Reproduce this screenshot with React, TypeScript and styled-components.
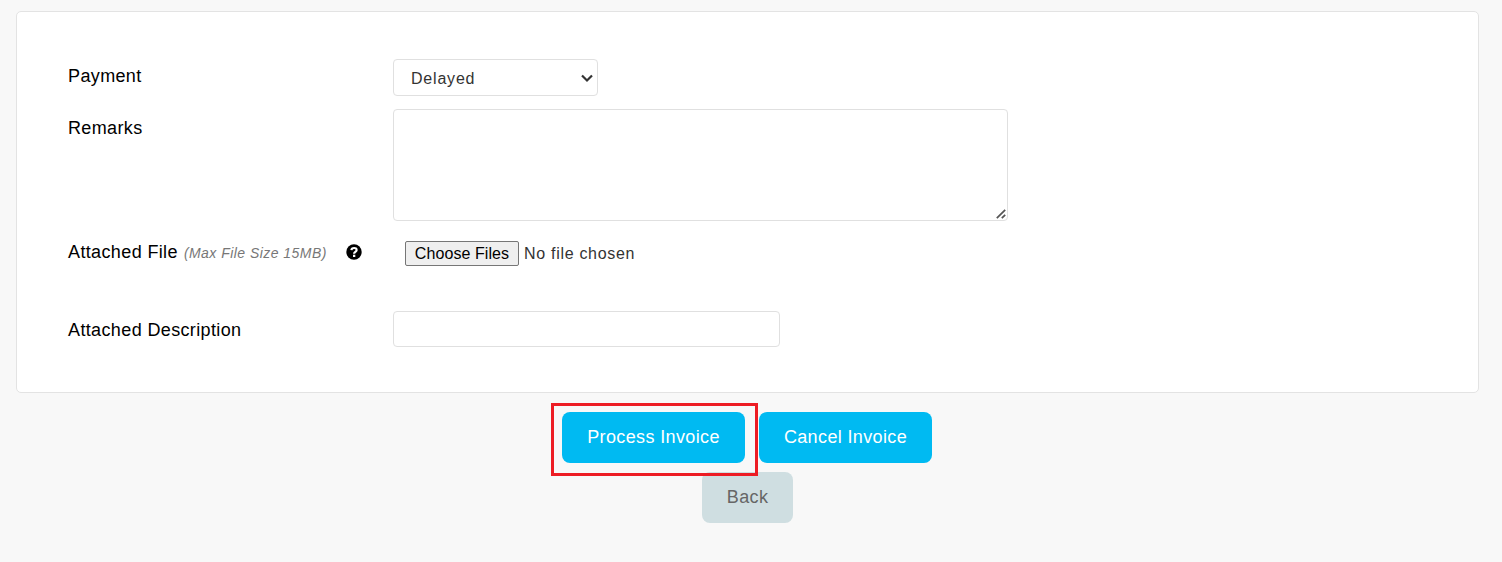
import React from 'react';
import styled, { createGlobalStyle } from 'styled-components';

const GlobalStyle = createGlobalStyle`
  * { box-sizing: border-box; }
  body { margin: 0; background: #f8f8f8; font-family: "Liberation Sans", Arial, sans-serif; color: #000; }
`;
const Page = styled.main`
  height: 562px;
  padding: 11px 23px 0 16px;
  overflow: hidden;
`;
const Card = styled.section`
  height: 382px;
  padding: 47px 51px 0;
  background: #fff;
  border: 1px solid #e3e3e3;
  border-radius: 5px;
`;
const Row = styled.div<{ $height: number }>`
  display: flex;
  align-items: flex-start;
  height: ${p => p.$height}px;
`;
const Label = styled.label<{ $top: number }>`
  display: flex;
  align-items: center;
  width: 325px;
  flex: none;
  height: 22px;
  margin-top: ${p => p.$top}px;
  font-size: 18px;
  letter-spacing: 0.37px;
  white-space: nowrap;
`;
const Hint = styled.em`
  margin: 2px 0 0 6px;
  font-size: 14px;
  letter-spacing: 0.46px;
  color: #777;
`;
const HelpIcon = styled.svg`
  margin-left: 19px;
`;
const SelectBox = styled.div`
  display: flex;
  align-items: center;
  justify-content: space-between;
  width: 205px;
  height: 37px;
  padding: 2px 4px 0 17px;
  border: 1px solid #e0e0e0;
  border-radius: 4px;
  font-size: 16px;
  letter-spacing: 0.8px;
  color: #333;
`;
const TextAreaFrame = styled.div`
  position: relative;
  height: 112px;
`;
const TextArea = styled.textarea`
  width: 615px;
  height: 112px;
  border: 1px solid #e0e0e0;
  border-radius: 4px;
  outline: none;
  resize: none;
`;
const ResizeGrip = styled.svg`
  position: absolute;
  right: 2px;
  bottom: 2px;
`;
const TextInput = styled.input`
  width: 387px;
  height: 36px;
  border: 1px solid #e0e0e0;
  border-radius: 4px;
  outline: none;
`;
const FilePicker = styled.div`
  display: flex;
  align-items: center;
  margin-left: 12px;
  gap: 5px;
  font-size: 16px;
  letter-spacing: 0.7px;
  color: #333;
`;
const ChooseButton = styled.button`
  width: 114px;
  height: 25px;
  padding: 0;
  border: 1px solid #767676;
  border-radius: 2px;
  background: #efefef;
  color: #000;
  font: 16px "Liberation Sans", Arial, sans-serif;
  letter-spacing: 0.08px;
`;
const Actions = styled.div`
  position: relative;
  z-index: 1;
  display: flex;
  padding: 10px 0 0 535px;
`;
const Highlight = styled.div`
  width: 207px;
  height: 73px;
  padding: 6px 0 0 8px;
  border: 3px solid #ed1c24;
`;
const Button = styled.button<{ $width: number; $muted?: boolean }>`
  width: ${p => p.$width}px;
  height: 51px;
  padding: 0 0 1px;
  border: 0;
  border-radius: 8px;
  background: ${p => (p.$muted ? '#cfdee1' : '#00baf2')};
  color: ${p => (p.$muted ? '#666' : '#fff')};
  font: 18px "Liberation Sans", Arial, sans-serif;
  letter-spacing: 0.37px;
`;
const CancelSlot = styled.div`
  padding: 9px 0 0 1px;
`;
const BackRow = styled.div`
  margin-top: -4px;
  padding-left: 686px;
`;

export default function App() {
  return (
    <>
      <GlobalStyle />
      <Page>
        <Card>
          <Row $height={50}>
            <Label $top={6}>Payment</Label>
            <SelectBox>
              Delayed
              <svg width="12" height="9" viewBox="0 0 12 9" fill="none" stroke="#333" strokeWidth="2.2">
                <path d="M1 1.5 6 6.5 11 1.5" />
              </svg>
            </SelectBox>
          </Row>
          <Row $height={132}>
            <Label $top={8}>Remarks</Label>
            <TextAreaFrame>
              <TextArea />
              <ResizeGrip width="10" height="10" viewBox="0 0 10 10" fill="none" stroke="#555" strokeWidth="1.7">
                <path d="M.8 9.2 9.2.8M5.8 9.2 9.2 5.8" />
              </ResizeGrip>
            </TextAreaFrame>
          </Row>
          <Row $height={70}>
            <Label $top={0}>
              Attached File <Hint>(Max File Size 15MB)</Hint>
              <HelpIcon width="16" height="16" viewBox="0 0 16 16">
                <circle cx="8" cy="8" r="7.7" fill="#000" />
                <path d="M5.4 6.1C5.7 3.4 10.7 3.2 10.6 6.1 10.5 7.9 8.1 7.8 8.1 9.7" fill="none" stroke="#fff" strokeWidth="2.2" />
                <path d="M7 10.7h2.3V13H7z" fill="#fff" />
              </HelpIcon>
            </Label>
            <FilePicker>
              <ChooseButton>Choose Files</ChooseButton>
              <span>No file chosen</span>
            </FilePicker>
          </Row>
          <Row $height={36}>
            <Label $top={8}>Attached Description</Label>
            <TextInput />
          </Row>
        </Card>
        <Actions>
          <Highlight>
            <Button $width={183}>Process Invoice</Button>
          </Highlight>
          <CancelSlot>
            <Button $width={173}>Cancel Invoice</Button>
          </CancelSlot>
        </Actions>
        <BackRow>
          <Button $width={91} $muted>Back</Button>
        </BackRow>
      </Page>
    </>
  );
}
